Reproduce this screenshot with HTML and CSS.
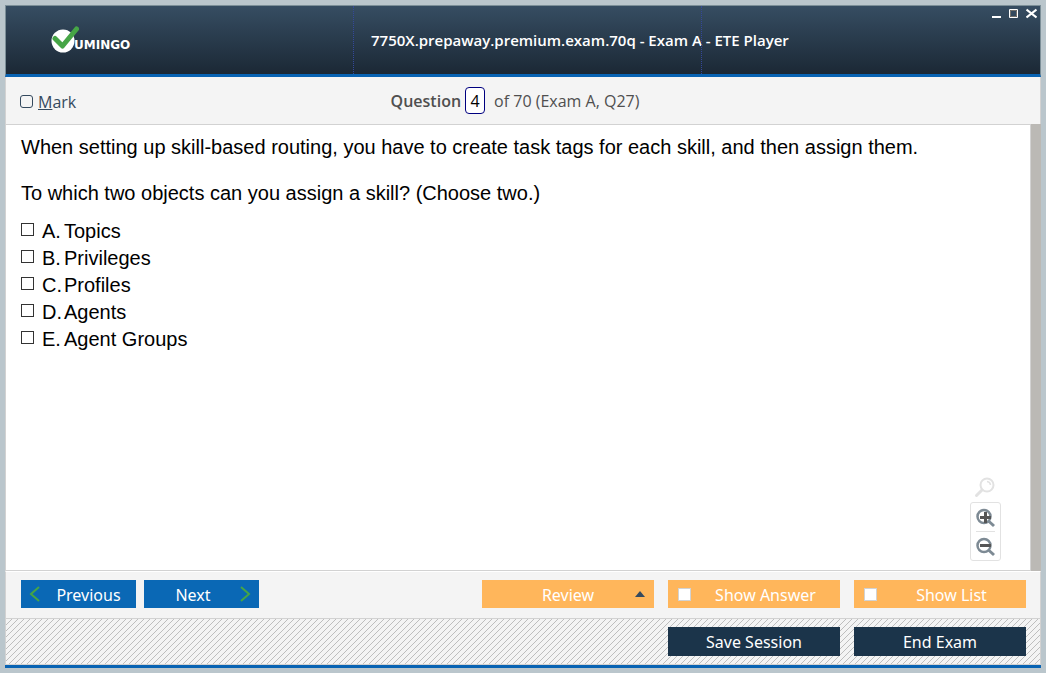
FILE: index.html
```html
<!DOCTYPE html>
<html lang="en">
<head>
<meta charset="utf-8">
<title>7750X.prepaway.premium.exam.70q - Exam A - ETE Player</title>
<link rel="stylesheet" href="styles.css">
</head>
<body>
<div class="window">
  <header class="titlebar">
    <div class="brand">
      <svg class="brand-mark" width="28" height="28" viewBox="0 0 28 28" aria-hidden="true">
        <circle cx="12" cy="15" r="11.5" fill="#fff"/>
        <path d="M4 12.500L11.500 20L25.500 3" fill="none" stroke="#46a546" stroke-width="5" stroke-linecap="round" stroke-linejoin="round"/>
      </svg>
      <span class="brand-name">UMINGO</span>
    </div>
    <h1 class="title">7750X.prepaway.premium.exam.70q - Exam A - ETE Player</h1>
    <div class="window-controls">
      <button type="button" class="window-button" aria-label="Minimize"><svg width="11" height="11" viewBox="0 0 11 11"><path d="M2 8h9v2H2z" fill="#fff"/></svg></button>
      <button type="button" class="window-button" aria-label="Maximize"><svg width="11" height="11" viewBox="0 0 11 11"><path d="M1.500 1.500h8v8h-8z" fill="none" stroke="#fff"/><path d="M2.500 2.500h6v6h-6z" fill="none" stroke="#74716b"/></svg></button>
      <button type="button" class="window-button" aria-label="Close"><svg width="11" height="11" viewBox="0 0 11 11"><path d="M0.500 1.500l10 8M10.500 1.500l-10 8" fill="none" stroke="#fff" stroke-width="2.200"/></svg></button>
    </div>
  </header>

  <section class="question-bar">
    <label class="mark"><input type="checkbox" class="mark-box"><span><u>M</u>ark</span></label>
    <div class="position">
      <label class="position-label" for="number">Question</label>
      <input id="number" class="number" type="text" value="4">
      <span>of 70 (Exam A, Q27)</span>
    </div>
  </section>

  <div class="viewer">
    <main class="content">
      <p class="question">When setting up skill-based routing, you have to create task tags for each skill, and then assign them.</p>
      <p class="question">To which two objects can you assign a skill? (Choose two.)</p>
      <div class="options">
        <label class="option"><input type="checkbox" class="option-box"><span class="letter">A.</span><span>Topics</span></label>
        <label class="option"><input type="checkbox" class="option-box"><span class="letter">B.</span><span>Privileges</span></label>
        <label class="option"><input type="checkbox" class="option-box"><span class="letter">C.</span><span>Profiles</span></label>
        <label class="option"><input type="checkbox" class="option-box"><span class="letter">D.</span><span>Agents</span></label>
        <label class="option"><input type="checkbox" class="option-box"><span class="letter">E.</span><span>Agent Groups</span></label>
      </div>
    </main>
    <div class="scroll-track"></div>
    <div class="zoom">
      <button type="button" class="zoom-reset" aria-label="Reset zoom"><svg width="22" height="22" viewBox="0 0 22 22"><g fill="none" stroke="#e2e2e2"><circle cx="13" cy="8" r="6.500" stroke-width="2"/><path d="M8 13l-5.500 5.500" stroke-width="3" stroke-linecap="round"/><path d="M13 4.500a4 4 0 0 1 3.500 3.500" stroke-width="1.500"/></g></svg></button>
      <div class="zoom-box">
        <button type="button" class="zoom-button" aria-label="Zoom in"><svg width="20" height="20" viewBox="0 0 20 20"><circle cx="8" cy="8.500" r="6.500" fill="none" stroke="#7d8a94" stroke-width="2.500"/><path d="M12.500 13l5.500 5" stroke="#7d8a94" stroke-width="3"/><path d="M4 9.500h11M9.500 4v11" stroke="#555" stroke-width="3"/></svg></button>
        <button type="button" class="zoom-button" aria-label="Zoom out"><svg width="20" height="20" viewBox="0 0 20 20"><circle cx="8" cy="8.500" r="6.500" fill="none" stroke="#7d8a94" stroke-width="2.500"/><path d="M12.500 13l5.500 5" stroke="#7d8a94" stroke-width="3"/><path d="M4 8.500h11" stroke="#555" stroke-width="3"/></svg></button>
      </div>
    </div>
  </div>

  <nav class="actions">
    <button type="button" class="button step"><svg width="12" height="18" viewBox="0 0 12 18"><path d="M10 2L2 9l8 7" fill="none" stroke="#46a546" stroke-width="2"/></svg><span class="button-text previous-text">Previous</span></button>
    <button type="button" class="button step"><span class="button-text next-text">Next</span><svg width="12" height="18" viewBox="0 0 12 18"><path d="M2 2l8 7-8 7" fill="none" stroke="#46a546" stroke-width="2"/></svg></button>
    <div class="tools">
      <button type="button" class="button tool review"><span class="button-text">Review</span><svg width="10" height="6" viewBox="0 0 10 6"><path d="M5 0l5 6H0z" fill="#34495e"/></svg></button>
      <label class="button tool"><input type="checkbox" class="tool-box"><span class="button-text toggle-text">Show Answer</span></label>
      <label class="button tool"><input type="checkbox" class="tool-box"><span class="button-text toggle-text">Show List</span></label>
    </div>
  </nav>

  <footer class="session">
    <button type="button" class="button dark">Save Session</button>
    <button type="button" class="button dark">End Exam</button>
  </footer>
</div>
</body>
</html>
```

FILE: styles.css
```css
* {
  box-sizing: border-box;
}

body {
  margin: 0;
  padding: 5px;
  min-height: 100vh;
  display: flex;
  background: #bac6cc;
  font-family: "Open Sans", "Noto Sans", sans-serif;
  font-size: 16px;
}

button,
input {
  margin: 0;
  font: inherit;
}

button {
  padding: 0;
  border: 0;
  background: none;
}

svg {
  display: block;
  flex: none;
}

.window {
  flex: 1;
  display: flex;
  flex-direction: column;
  border-bottom: 3px solid #0863b3;
  background: #f4f4f4;
}

.titlebar {
  display: grid;
  grid-template-columns: minmax(0, 347fr) minmax(0, 348fr) minmax(0, 339fr);
  height: 72px;
  border: 1px solid #7c8f98;
  border-bottom: 3px solid #0863b3;
  background: linear-gradient(#364d62, #1b2835);
  color: #fff;
}

.brand {
  display: flex;
  align-items: center;
  padding-left: 45px;
}

.brand-name {
  font: bold 12px "DejaVu Sans", sans-serif;
  padding-top: 10px;
  margin-left: -5px;
}

.title {
  margin: 0;
  padding-left: 17px;
  border-left: 1px dotted #34489a;
  font-size: 15px;
  font-weight: 600;
  line-height: 68px;
  white-space: nowrap;
}

.window-controls {
  display: flex;
  justify-content: flex-end;
  gap: 7px;
  padding: 2px 3px;
  border-left: 1px dotted #34489a;
}

.window-button {
  height: 11px;
}

.question-bar {
  position: relative;
  display: flex;
  align-items: center;
  justify-content: center;
  height: 47px;
  border: 1px solid #d2d2d2;
  border-width: 0 1px;
  color: #4f4f4f;
}

.mark {
  display: flex;
  align-items: center;
  gap: 5px;
  position: absolute;
  left: 14px;
  padding-top: 2px;
  color: #34495e;
}

.mark-box {
  appearance: none;
  width: 13px;
  height: 13px;
  border: 1px solid #34495e;
  border-radius: 3px;
}

.position {
  display: flex;
  align-items: center;
  padding-right: 16px;
}

.position-label {
  font-weight: 600;
}

.number {
  width: 20px;
  height: 27px;
  margin: 0 9px 0 4px;
  padding: 0;
  border: 1px solid #000080;
  border-radius: 4px;
  background: #fff;
  color: #000;
  text-align: center;
}

.viewer {
  position: relative;
  flex: 1;
  display: flex;
  border-left: 1px solid #d2d2d2;
}

.content {
  flex: 1;
  padding: 11px 15px;
  border: 1px solid #d2d2d2;
  border-left: 0;
  background: #fff;
  color: #000;
  font: 20px/23px "Liberation Sans", Arial, sans-serif;
}

.question {
  margin: 0 0 23px;
}

.options {
  margin-top: -10px;
}

.option {
  display: flex;
  align-items: center;
  height: 27px;
}

.option-box {
  appearance: none;
  width: 13px;
  height: 13px;
  margin: 0 8px 4px 0;
  border: 1px solid #333;
}

.letter {
  width: 22px;
}

.scroll-track {
  width: 10px;
  background: #bbb9b5;
}

.zoom {
  position: absolute;
  right: 40px;
  bottom: 10px;
  display: flex;
  flex-direction: column;
  align-items: center;
  gap: 3px;
}

.zoom-reset {
  margin-right: 2px;
}

.zoom-box {
  display: flex;
  flex-direction: column;
  width: 31px;
  padding: 0 5px;
  border: 1px solid #e2e2e2;
  border-radius: 3px;
}

.zoom-button {
  height: 28px;
  padding-top: 2px;
}

.zoom-button + .zoom-button {
  height: 29px;
  border-top: 1px solid #e2e2e2;
}

.actions {
  display: flex;
  gap: 8px;
  padding: 8px 14px 10px 15px;
  border: 1px solid #d2d2d2;
  border-top-color: #fff;
}

.tools {
  display: flex;
  gap: 14px;
  margin-left: auto;
}

.button {
  display: flex;
  align-items: center;
  justify-content: center;
  height: 28px;
  color: #fff;
  font: 16px/20px "Noto Sans", sans-serif;
}

.button-text {
  flex: 1;
  padding-top: 2px;
  text-align: center;
}

.step {
  width: 115px;
  padding: 0 8px;
  background: #0a68b5;
}

.previous-text {
  padding-left: 8px;
}

.next-text {
  padding-right: 5px;
}

.tool {
  width: 172px;
  padding: 0 10px;
  background: #ffb65b;
}

.review {
  padding: 0 9px 0 19px;
}

.toggle-text {
  padding-left: 10px;
}

.tool-box {
  appearance: none;
  width: 13px;
  height: 13px;
  border: 1px solid #d2d2d2;
  background: #fff;
}

.session {
  display: flex;
  justify-content: flex-end;
  gap: 14px;
  padding: 8px 14px 8px 15px;
  border: 1px solid #d2d2d2;
  border-top: 0;
  background: linear-gradient(135deg, #f4f4f4 45%, #bebebe 45% 55%, #f4f4f4 55%);
  background-size: 6px 6px;
}

.dark {
  width: 172px;
  height: 29px;
  background: #1b344a;
}
```
